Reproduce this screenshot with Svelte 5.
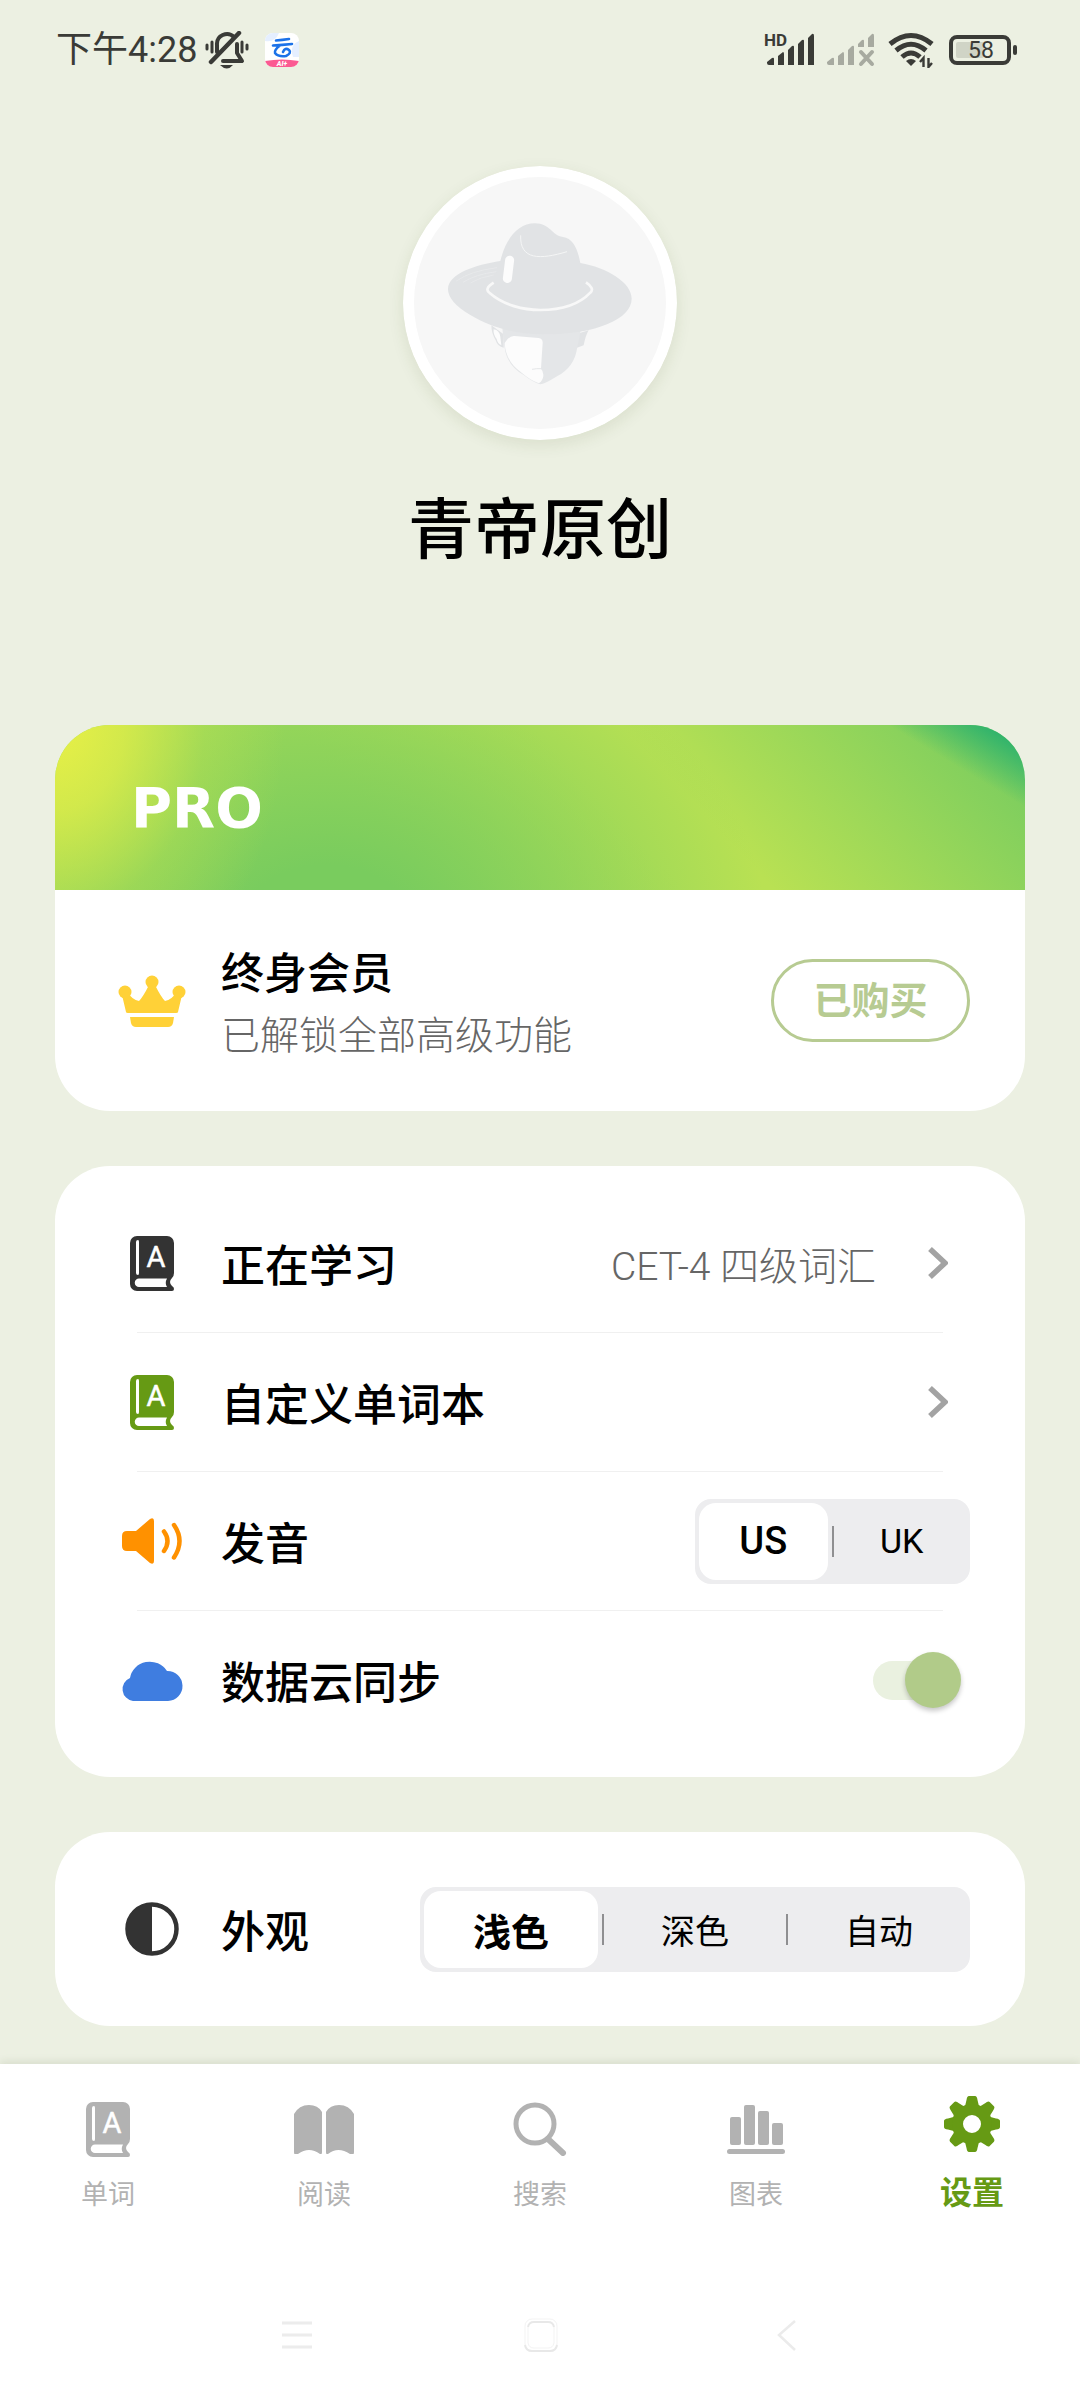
<script>
  let accent = $state('us');
  let theme = $state('light');
  let sync = $state(true);

  const accents = [
    { id: 'us', label: 'US' },
    { id: 'uk', label: 'UK' }
  ];
  const themes = [
    { id: 'light', label: '浅色' },
    { id: 'dark', label: '深色' },
    { id: 'auto', label: '自动' }
  ];
</script>

{#snippet book()}
  <svg class="book" viewBox="0 0 44 55" aria-hidden="true">
    <path
      fill="currentColor"
      fill-rule="evenodd"
      d="M7 0H37a7 7 0 0 1 7 7V37q0 3-2 5q-4 4 0 8q2 1 2 3q0 2-2 2H7a7 7 0 0 1-7-7V7a7 7 0 0 1 7-7ZM8 4Q6 4 6 6V37Q6 39 8 39Q9 39 9 37V6Q9 4 8 4ZM9 42.500a4 4 0 0 0 0 8.500H37q-2.500-4 0-8.500Z"
    />
    <text
      x="26"
      y="31"
      text-anchor="middle"
      font-size="29"
      font-weight="400"
      fill="#fff"
      stroke="#fff"
      stroke-width="0.500"
      stroke-linejoin="round">A</text>
  </svg>
{/snippet}

{#snippet chevron()}
  <svg class="chevron" viewBox="0 0 20 32" aria-hidden="true">
    <path d="M2 2 17 16 2 30" fill="none" stroke="#a3a3a3" stroke-width="5.500" />
  </svg>
{/snippet}

{#snippet segmented(name, legend, options, selected, pick)}
  <fieldset class="segmented" class:wide={options.length > 2}>
    <legend class="sr">{legend}</legend>
    {#each options as option, i}
      {#if i > 0}<span class="sep"></span>{/if}
      <label class="segment" class:active={selected === option.id}>
        <input
          class="sr"
          type="radio"
          {name}
          value={option.id}
          checked={selected === option.id}
          onchange={() => pick(option.id)}
        />
        {option.label}
      </label>
    {/each}
  </fieldset>
{/snippet}

<div class="app">
  <header class="status">
    <div class="status-group">
      <span class="time">下午4:28</span>
      <svg class="mute" viewBox="0 0 44 38" aria-hidden="true">
        <g fill="none" stroke="#3a3b37" stroke-linecap="round" stroke-width="4">
          <path d="M12 21V14a10 10 0 0 1 17-8" />
          <path d="M32 13V22L37 30H18" stroke-linejoin="round" />
          <path d="M6 31 34 2" stroke-width="4.500" />
          <path d="M2 14V18M7 11V21M37 11V21M42 14V18" stroke-width="3" />
        </g>
        <path d="M15 34H28Q22 41 15 34Z" fill="#3a3b37" />
      </svg>
      <svg class="app-badge" viewBox="0 0 34 34" aria-hidden="true">
        <defs><clipPath id="badge"><rect width="34" height="34" rx="8" /></clipPath></defs>
        <g clip-path="url(#badge)">
          <rect width="34" height="34" fill="#fff" />
          <path d="M0 8Q10 10 14 0H0ZM34 8Q24 12 28 24H34Z" fill="#e5efff" />
          <path d="M0 28Q17 25 34 28V34H0Z" fill="#fb5a92" />
        </g>
        <g fill="none" stroke="#1c72e8" stroke-width="2.600" stroke-linecap="round">
          <path d="M11 7.500Q17 7 24 6M8 12.500Q17 12 27 11M15 12.500Q9 17 10 20Q13 24 21 23Q27 20 24 17Q20 14 18 19" />
        </g>
        <text x="17" y="33" font-size="7" font-weight="900" font-style="italic" fill="#fff" text-anchor="middle">AI+</text>
      </svg>
    </div>
    <div class="status-group">
      <svg class="signal" viewBox="0 0 50 34" aria-hidden="true">
        <text x="-2" y="13" font-size="17" font-weight="700" fill="#3a3b37">HD</text>
        <path
          fill="#3a3b37"
          d="M1 29 6 25Q8 24 8 26V32H3Q1 32 1 30ZM12 23 17 19Q18 19 18 21V32H12ZM22 17 26 13Q28 12 28 14V32H22ZM32 11 36 7Q38 6 38 8V32H32ZM42 5 46 1Q48 0 48 3V32H42Z"
        />
      </svg>
      <svg class="signal second" viewBox="0 0 50 34" aria-hidden="true">
        <path
          fill="#a7aaa0"
          d="M1 29 6 25Q8 24 8 26V32H3Q1 32 1 30ZM12 23 17 19Q18 19 18 21V32H12ZM22 17 26 13Q28 12 28 14V32H22ZM32 11 36 7Q38 6 38 8V14H32ZM42 5 46 1Q48 0 48 3V14H42Z"
        />
        <path d="M35 19 46 31M46 19 35 31" stroke="#a7aaa0" stroke-width="4" stroke-linecap="round" />
      </svg>
      <svg class="wifi" viewBox="0 0 46 36" aria-hidden="true">
        <g fill="none" stroke="#3a3b37" stroke-width="5">
          <path d="M2 12Q23-5 44 12M8 18.500Q23 6 38 18.500M14 25Q23 17 32 25" />
        </g>
        <path d="M18 29Q23 25 28 29L23 34Z" fill="#3a3b37" />
        <path d="M35.500 35V26L32 30M40.500 26V35L44 31" fill="none" stroke="#3a3b37" stroke-width="2.400" />
      </svg>
      <svg class="battery" viewBox="0 0 68 30" aria-hidden="true">
        <rect x="2" y="2" width="58" height="26" rx="6" fill="none" stroke="#3a3b37" stroke-width="4" />
        <rect x="7" y="7" width="28" height="16" rx="2" fill="#d0d4c6" />
        <rect x="64" y="10" width="4" height="10" rx="2" fill="#3a3b37" />
        <text x="32" y="23" font-size="23" font-weight="400" fill="#3a3b37" text-anchor="middle">58</text>
      </svg>
    </div>
  </header>

  <main>
    <section class="profile">
      <svg class="avatar" viewBox="38 47 822 822" role="img" aria-label="头像">
        <circle cx="449" cy="458" r="411" fill="#fff" />
        <circle cx="449" cy="458" r="378" fill="#f7f7f7" />
        <path d="M303 525 340 552V592Q322 590 316 570Q303 548 303 525ZM595 540Q586 555 580 585L560 592V550Z" fill="#e1e3e5" />
        <path d="M310 537Q328 540 330 560L333 585Q322 580 319 566Q308 552 310 537Z" fill="#fcfcfc" />
        <path d="M336 535H572L560 595Q552 650 500 678Q462 702 450 702Q432 698 400 674Q350 645 343 592Z" fill="#e4e6e8" />
        <path d="M343 578Q356 556 372 557L445 563Q458 565 457 578Q454 620 452 656Q462 665 458 682Q452 698 444 698Q420 690 395 668Q346 635 343 578Z" fill="#fcfcfc" />
        <path d="M425 657Q440 654 452 655" stroke="#e4e6e8" stroke-width="3" fill="none" />
        <path
          d="M330 332C345 270 380 219 434 219C480 219 484 256 518 260C550 264 563 300 570 338C650 352 724 396 724 445C724 505 620 552 460 552C370 551 300 530 240 494C195 468 172 440 173 415C176 370 255 343 330 332Z"
          fill="#e1e3e5"
        />
        <path d="M310 397Q280 416 298 428C340 465 400 479 450 479C510 479 565 464 600 427Q614 414 587 396" fill="none" stroke="#f8f8f8" stroke-width="8" />
        <path d="M391 255C388 330 450 328 530 304" fill="none" stroke="#f4f5f5" stroke-width="3" />
        <path d="M198 392Q240 362 320 352M218 396Q255 372 318 364M240 398Q270 380 310 374" fill="none" stroke="#eaebed" stroke-width="2" />
        <rect x="341" y="316" width="27" height="82" rx="13" transform="rotate(7 354 357)" fill="#fcfcfc" />
      </svg>
      <h1>青帝原创</h1>
    </section>

    <section class="card member">
      <div class="banner"><span class="pro">PRO</span></div>
      <div class="member-row">
        <span class="icon">
          <svg class="crown" viewBox="0 0 68 52" aria-hidden="true">
            <g fill="#ffd137">
              <circle cx="34" cy="7" r="6.500" />
              <circle cx="7" cy="17" r="6.500" />
              <circle cx="61" cy="17" r="6.500" />
              <path d="M4 20 10 17Q14 25 21 26Q25 22 31 10H37Q43 22 47 26Q54 25 58 17L64 20L60 37Q60 38 58 38H10Q8 38 8 37Z" />
              <path d="M12 42H56L55 48Q54 52 50 52H18Q14 52 13 48Z" />
            </g>
          </svg>
        </span>
        <div class="member-text">
          <h2>终身会员</h2>
          <p>已解锁全部高级功能</p>
        </div>
        <button class="bought" type="button">已购买</button>
      </div>
    </section>

    <section class="card list">
      <button class="row" type="button">
        <span class="icon ink">{@render book()}</span>
        <span class="label">正在学习</span>
        <span class="value">CET-4 四级词汇</span>
        {@render chevron()}
      </button>
      <hr />
      <button class="row" type="button">
        <span class="icon green">{@render book()}</span>
        <span class="label">自定义单词本</span>
        {@render chevron()}
      </button>
      <hr />
      <div class="row">
        <span class="icon">
          <svg class="speaker" viewBox="0 0 60 46" aria-hidden="true">
            <path d="M5 13H14L28 1Q32-1 32 3V43Q32 47 28 45L14 33H5Q0 33 0 28V18Q0 13 5 13Z" fill="#ff9100" />
            <path d="M42 13.500Q49 23 42 33M52 7Q63 23 52 39.500" fill="none" stroke="#ff9100" stroke-width="4.500" stroke-linecap="round" />
          </svg>
        </span>
        <span class="label">发音</span>
        {@render segmented('accent', '发音', accents, accent, (id) => (accent = id))}
      </div>
      <hr />
      <div class="row">
        <span class="icon">
          <svg class="cloud" viewBox="0 0 62 42" aria-hidden="true">
            <path d="M12 42A12 12 0 0 1 9 19A20 19 0 0 1 46 12A15 15 0 0 1 47 42Z" fill="#3f7de0" />
          </svg>
        </span>
        <label class="label" for="sync">数据云同步</label>
        <input id="sync" class="switch" type="checkbox" role="switch" bind:checked={sync} />
      </div>
    </section>

    <section class="card look">
      <div class="row">
        <span class="icon">
          <svg class="contrast" viewBox="0 0 54 54" aria-hidden="true">
            <circle cx="27" cy="27" r="24.500" fill="none" stroke="#333" stroke-width="4.500" />
            <path d="M27 2A25 25 0 0 0 27 52Z" fill="#333" />
          </svg>
        </span>
        <span class="label">外观</span>
        {@render segmented('theme', '外观', themes, theme, (id) => (theme = id))}
      </div>
    </section>
  </main>

  <footer class="bottom">
    <nav class="tabs" aria-label="主导航">
      <a class="tab" href="#words">
        <span class="tab-icon">{@render book()}</span>
        <span>单词</span>
      </a>
      <a class="tab" href="#read">
        <span class="tab-icon">
          <svg class="open-book" viewBox="0 0 60 50" aria-hidden="true">
            <path
              fill="currentColor"
              d="M0 10Q5 1 15 1Q24 1 28 8V48Q28 51 26 50Q15 42 4 50Q0 52 0 48ZM60 10Q55 1 45 1Q36 1 32 8V48Q32 51 34 50Q44 42 56 50Q60 52 60 48Z"
            />
          </svg>
        </span>
        <span>阅读</span>
      </a>
      <a class="tab" href="#search">
        <span class="tab-icon">
          <svg class="search" viewBox="0 0 54 54" aria-hidden="true">
            <g fill="none" stroke="currentColor">
              <circle cx="22" cy="22" r="19" stroke-width="5" />
              <path d="M35 37 50 51" stroke-width="6" stroke-linecap="round" />
            </g>
          </svg>
        </span>
        <span>搜索</span>
      </a>
      <a class="tab" href="#charts">
        <span class="tab-icon">
          <svg class="chart" viewBox="0 0 58 50" aria-hidden="true">
            <g fill="currentColor">
              <rect x="3" y="13" width="11" height="28" rx="2" />
              <rect x="17" y="1" width="11" height="40" rx="2" />
              <rect x="31" y="7" width="11" height="34" rx="2" />
              <rect x="45" y="19" width="11" height="22" rx="2" />
              <rect x="0" y="45" width="58" height="5" rx="2.500" />
            </g>
          </svg>
        </span>
        <span>图表</span>
      </a>
      <a class="tab current" href="#settings" aria-current="page">
        <span class="tab-icon">
          <svg class="gear" viewBox="-28 -28 56 56" aria-hidden="true">
            <g fill="currentColor">
              {#each [0, 45, 90, 135, 180, 225, 270, 315] as angle}
                <path transform="rotate({angle})" d="M-9-15Q-6-19-5.500-24Q-5-28-3-28H3Q5-28 5.500-24Q6-19 9-15Z" />
              {/each}
            </g>
            <circle r="14.500" fill="none" stroke="currentColor" stroke-width="11" />
          </svg>
        </span>
        <span>设置</span>
      </a>
    </nav>
    <div class="system">
      <button type="button" aria-label="最近任务">
        <svg viewBox="0 0 36 36" aria-hidden="true">
          <path d="M3 6H33M3 18H33M3 30H33" stroke="#ececec" stroke-width="3" />
        </svg>
      </button>
      <button type="button" aria-label="主屏幕">
        <svg viewBox="0 0 36 36" aria-hidden="true">
          <rect x="1" y="2" width="32" height="32" rx="7" fill="none" stroke="#f3f3f3" stroke-width="1" />
          <path d="M1 28Q2 34 8 34H26Q32 34 33 28" fill="none" stroke="#e8e8e8" stroke-width="2" />
          <path d="M4 10Q5 5 10 5H24Q29 5 30 10" fill="none" stroke="#e8e8e8" stroke-width="2" />
          <path d="M4 10V26Q5 31 10 31H24Q29 31 30 26V10" fill="none" stroke="#f3f3f3" stroke-width="1" />
        </svg>
      </button>
      <button type="button" aria-label="返回">
        <svg viewBox="0 0 36 36" aria-hidden="true">
          <path d="M27 4 11 18 27 33" fill="none" stroke="#ebebeb" stroke-width="2.500" />
        </svg>
      </button>
    </div>
  </footer>
</div>

<style>
  :global(body) {
    background: #ecf0e2;
  }

  .app {
    display: flex;
    flex-direction: column;
    min-height: 100vh;
    background: #ecf0e2;
    color: #000;
    font-family: Roboto, 'Noto Sans CJK SC', sans-serif;
    font-size: 44px;
  }

  h1,
  h2,
  p {
    margin: 0;
  }

  svg {
    display: block;
    flex: none;
  }

  button {
    font: inherit;
    color: inherit;
    background: none;
    border: 0;
    padding: 0;
    cursor: pointer;
  }

  .sr {
    position: absolute;
    width: 1px;
    height: 1px;
    margin: 0;
    padding: 0;
    opacity: 0;
    overflow: hidden;
  }

  /* status bar */
  .status {
    display: flex;
    justify-content: space-between;
    align-items: center;
    height: 100px;
    padding: 0 63px 0 56px;
    box-sizing: border-box;
    color: #3a3b37;
  }

  .status-group {
    display: flex;
    align-items: center;
  }

  .time {
    font-size: 36px;
    line-height: 40px;
    font-weight: 400;
  }

  .mute {
    width: 44px;
    height: 38px;
    margin-left: 8px;
  }

  .app-badge {
    width: 34px;
    height: 34px;
    margin-left: 16px;
  }

  .signal {
    width: 50px;
    height: 34px;
    overflow: visible;
  }

  .second {
    margin-left: 10px;
  }

  .wifi {
    width: 46px;
    height: 36px;
    margin-left: 12px;
  }

  .battery {
    width: 68px;
    height: 30px;
    margin-left: 15px;
  }

  /* profile */
  .profile {
    display: flex;
    flex-direction: column;
    align-items: center;
    padding: 66px 0 154px;
  }

  .avatar {
    width: 274px;
    height: 274px;
    border-radius: 50%;
    box-shadow: 0 5px 16px rgba(60, 80, 20, 0.1);
  }

  h1 {
    margin-top: 51px;
    font-size: 66px;
    line-height: 80px;
    font-weight: 500;
  }

  /* cards */
  .card {
    margin: 0 55px 55px;
    background: #fff;
    border-radius: 55px;
    overflow: hidden;
  }

  .banner {
    display: flex;
    align-items: center;
    height: 165px;
    padding-left: 76px;
    background:
      linear-gradient(31deg, rgba(47, 179, 108, 0) 89%, #2fb36c 97%),
      radial-gradient(ellipse 230px 290px at 0 0, #e8f046 0%, rgba(229, 239, 71, 0.75) 30%, rgba(200, 230, 77, 0.3) 65%, rgba(185, 225, 83, 0) 100%),
      radial-gradient(ellipse 440px 330px at 28% 125%, #79cc5e 20%, rgba(121, 204, 94, 0.5) 60%, rgba(121, 204, 94, 0) 100%),
      linear-gradient(47deg, #abdd55 0%, #abdd55 35%, #b9e153 56%, #b9e153 64%, #7bcd5f 96%);
  }

  .pro {
    color: #fff;
    font-family: 'DejaVu Sans', sans-serif;
    font-size: 56px;
    line-height: 60px;
    font-weight: 700;
  }

  .member-row,
  .row {
    display: flex;
    align-items: center;
    width: 100%;
    box-sizing: border-box;
    padding: 0 55px 0 65px;
    text-align: left;
  }

  .member-row {
    height: 221px;
  }

  .icon {
    display: flex;
    justify-content: center;
    flex: none;
    width: 64px;
    margin-right: 37px;
  }

  .crown {
    width: 68px;
    height: 52px;
  }

  .member-text {
    flex: 1;
    padding-top: 8px;
  }

  h2 {
    font-size: 43px;
    line-height: 62px;
    font-weight: 500;
  }

  .member-text p {
    font-size: 39px;
    line-height: 62px;
    font-weight: 300;
    color: #666;
  }

  .bought {
    width: 199px;
    height: 83px;
    border: 3px solid #b7cb92;
    border-radius: 42px;
    color: #b7cb92;
    font-size: 38px;
    line-height: 78px;
    font-weight: 700;
  }

  .list {
    padding: 28px 0;
  }

  .row {
    height: 138px;
  }

  .look {
    margin-bottom: 38px;
  }

  .look .row {
    height: 194px;
  }

  hr {
    height: 1px;
    margin: 0 82px;
    border: 0;
    background: #f0f0f0;
  }

  .label {
    flex: 1;
    font-weight: 500;
  }

  .value {
    margin-right: 52px;
    font-size: 39px;
    font-weight: 300;
    color: #666;
  }

  .ink {
    color: #333;
  }

  .green {
    color: #669a14;
  }

  .book {
    width: 44px;
    height: 55px;
  }

  .chevron {
    width: 20px;
    height: 32px;
    margin-right: 22px;
  }

  .speaker {
    width: 60px;
    height: 46px;
  }

  .cloud {
    width: 62px;
    height: 42px;
  }

  .contrast {
    width: 54px;
    height: 54px;
  }

  /* segmented control */
  .segmented {
    display: flex;
    align-items: center;
    gap: 4px;
    width: 275px;
    height: 85px;
    box-sizing: border-box;
    margin: 0;
    padding: 4px;
    border: 0;
    border-radius: 16px;
    background: #ededef;
  }

  .wide {
    width: 550px;
  }

  .segment {
    display: flex;
    flex: 1;
    align-items: center;
    justify-content: center;
    height: 77px;
    border-radius: 17px;
    font-size: 34px;
    cursor: pointer;
  }

  .active {
    background: #fff;
    font-size: 38px;
    font-weight: 500;
  }

  .wide .active {
    font-weight: 700;
  }

  .sep {
    width: 2px;
    height: 31px;
    background: #8f8f91;
  }

  /* switch */
  .switch {
    appearance: none;
    display: flex;
    align-items: center;
    width: 82px;
    height: 39px;
    margin: 0 15px 0 0;
    border-radius: 20px;
    background: #e4e4e4;
  }

  .switch::before {
    content: '';
    flex: none;
    width: 56px;
    height: 56px;
    border-radius: 50%;
    background: #fafafa;
    box-shadow: 0 3px 5px rgba(0, 0, 0, 0.22);
  }

  .switch:checked {
    background: #eaf1e0;
  }

  .switch:checked::before {
    margin-left: 32px;
    background: #b1cb89;
  }

  /* bottom area */
  .bottom {
    margin-top: auto;
    background: #fff;
    box-shadow: 0 -2px 8px rgba(60, 70, 40, 0.12);
  }

  .tabs {
    display: flex;
    padding-top: 30px;
  }

  .tab {
    display: flex;
    flex: 1;
    flex-direction: column;
    align-items: center;
    color: #b2b2b2;
    font-size: 27px;
    line-height: 40px;
    text-decoration: none;
  }

  .tab-icon {
    display: flex;
    align-items: center;
    height: 70px;
    margin-bottom: 11px;
  }

  .current {
    color: #669a14;
    font-size: 32px;
    font-weight: 700;
  }

  .current .tab-icon {
    height: 60px;
    margin-bottom: 19px;
  }

  .open-book {
    width: 60px;
    height: 50px;
  }

  .search {
    width: 54px;
    height: 54px;
  }

  .chart {
    width: 58px;
    height: 50px;
  }

  .gear {
    width: 56px;
    height: 56px;
  }

  .system {
    display: flex;
    justify-content: space-between;
    padding: 102px 276px 47px 279px;
  }

  .system svg {
    width: 36px;
    height: 36px;
  }
</style>
